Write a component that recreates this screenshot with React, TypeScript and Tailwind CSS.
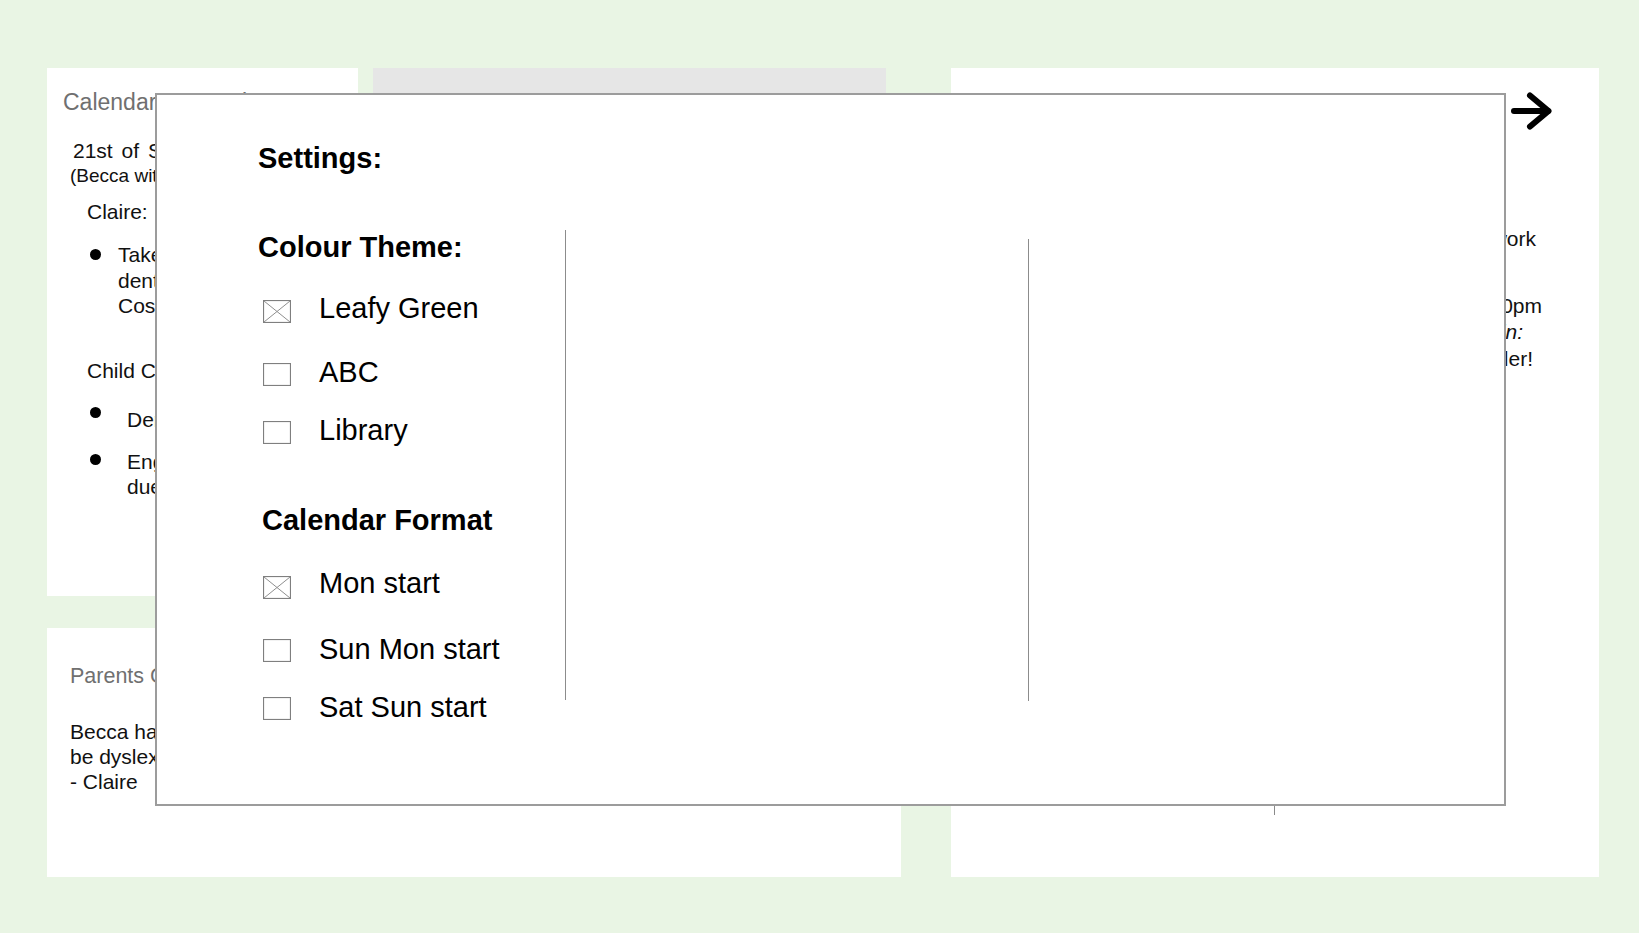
import React from 'react';

function Checkbox({ checked, offset = 8 }: { checked?: boolean; offset?: number }) {
  return (
    <svg
      width="28"
      height="23"
      viewBox="0 0 28 23"
      className="ml-[5px] shrink-0"
      style={{ marginTop: offset }}
    >
      <rect x="0.5" y="0.5" width="27" height="22" fill="white" stroke="#7f7f7f" strokeWidth="1.2" />
      {checked && (
        <>
          <line x1="1" y1="1" x2="27" y2="22" stroke="#8f8f8f" strokeWidth="1" />
          <line x1="27" y1="1" x2="1" y2="22" stroke="#8f8f8f" strokeWidth="1" />
        </>
      )}
    </svg>
  );
}

function Option({ label, checked, className = '', offset }: { label: string; checked?: boolean; className?: string; offset?: number }) {
  return (
    <div className={`flex items-start ${className}`}>
      <Checkbox checked={checked} offset={offset} />
      <span className="ml-[28px] text-[29px] leading-[34px] text-black">{label}</span>
    </div>
  );
}

function Bullet({ top }: { top: number }) {
  return <span className="block h-[11px] w-[11px] shrink-0 rounded-full bg-black" style={{ marginTop: top }} />;
}

export default function App() {
  return (
    <div className="relative min-h-screen overflow-hidden bg-[#e9f5e4] font-['Liberation_Sans',Arial,sans-serif]">
      {/* cards behind the dialog */}
      <div className="flex gap-[50px] pl-[47px] pt-[68px]">
        <div className="flex w-[854px] flex-col gap-[32px]">
          <div className="flex h-[528px] gap-[15px]">
            {/* calendar card */}
            <div className="w-[311px] bg-white pl-[16px] pt-[20px] text-[#111]">
              <div className="whitespace-nowrap text-[23px] leading-[28px] text-[#707070]">Calendar September 2022</div>
              <div className="ml-[10px] mt-[22px] whitespace-nowrap text-[21px] leading-[25px] [word-spacing:3px]">21st of September</div>
              <div className="ml-[7px] mt-[2px] whitespace-nowrap text-[19px] leading-[22px]">(Becca with Claire)</div>
              <div className="ml-[24px] mt-[12px] text-[21px] leading-[25px]">Claire:</div>
              <div className="ml-[27px] mt-[18px] flex whitespace-nowrap text-[21px] leading-[25.5px]">
                <Bullet top={7} />
                <div className="ml-[17px]">
                  <div>Take Becca</div>
                  <div>dentist at 3pm</div>
                  <div>Costa after</div>
                </div>
              </div>
              <div className="ml-[24px] mt-[39px] text-[21px] leading-[25px]">Child Care:</div>
              <div className="ml-[27px] mt-[24px] flex whitespace-nowrap text-[21px] leading-[25px]">
                <Bullet top={0} />
                <div className="ml-[26px]">Dentist note</div>
              </div>
              <div className="ml-[27px] mt-[17px] flex whitespace-nowrap text-[21px] leading-[25px]">
                <Bullet top={5} />
                <div className="ml-[26px]">
                  <div>English test</div>
                  <div>due Friday</div>
                </div>
              </div>
            </div>

            {/* week card */}
            <div className="w-[513px] bg-[#e6e6e6] px-[30px] pt-[20px]">
              <div className="flex justify-between whitespace-nowrap text-[24px] leading-[28px] text-[#333]">
                <span>‹</span>
                <span>Week of September 2022</span>
                <span>›</span>
              </div>
            </div>
          </div>

          {/* parents comments */}
          <div className="h-[249px] bg-white pl-[23px] pt-[35px] text-[#111]">
            <div className="whitespace-nowrap text-[21.5px] leading-[26px] text-[#707070]">Parents Comments</div>
            <div className="mt-[30px] whitespace-nowrap text-[21px] leading-[25px]">
              <div>Becca has been found to</div>
              <div>be dyslexic, let's talk soon</div>
              <div>- Claire</div>
            </div>
          </div>
        </div>

        {/* homework card */}
        <div className="flex h-[809px] w-[648px] flex-col bg-white text-[#111]">
          <div className="flex items-start justify-between pl-[16px] pr-[47px] pt-[24px]">
            <div className="mt-[6px] text-[22px] leading-[26px] text-[#707070]">Homework</div>
            <svg width="42" height="40" viewBox="0 0 42 40" fill="none" stroke="black" strokeWidth="6" strokeLinecap="round" strokeLinejoin="round">
              <path d="M4 19 H38" />
              <path d="M20 3.5 L38.5 19 L20 34.5" />
            </svg>
          </div>
          <div className="flex">
            <div className="h-[683px] w-[324px] border-r border-[#8a8a8a]" />
            <div className="flex-1 whitespace-nowrap pr-[57px] text-right text-[21px] leading-[26.5px]">
              <div className="mt-[94px] pr-[6px]">Spelling homework</div>
              <div className="mt-[40px]">Swimming 3:30pm</div>
              <div className="pr-[19px] italic">Remember to bring in:</div>
              <div className="pr-[9px]">Don't forget a ruler!</div>
            </div>
          </div>
        </div>
      </div>

      {/* settings dialog */}
      <div className="absolute left-[155px] top-[93px] h-[713px] w-[1351px] border-2 border-[#9c9c9c] bg-white pl-[101px] pt-[46px] text-black">
        <div className="text-[29px] font-bold leading-[34px]">Settings:</div>
        <div className="mt-[55px] flex items-start">
          <div className="w-[307px]">
            <div className="text-[29px] font-bold leading-[34px]">Colour Theme:</div>
            <Option className="mt-[27px]" label="Leafy Green" checked offset={9} />
            <Option className="mt-[30px]" label="ABC" />
            <Option className="mt-[24px]" label="Library" />
            <div className="ml-[4px] mt-[56px] text-[29px] font-bold leading-[34px]">Calendar Format</div>
            <Option className="mt-[29px]" label="Mon start" checked offset={10} />
            <Option className="mt-[32px]" label="Sun Mon start" offset={7} />
            <Option className="mt-[24px]" label="Sat Sun start" offset={7} />
          </div>
          <div className="h-[470px] w-px bg-[#8c8c8c]" />
          <div className="w-[462px]" />
          <div className="mt-[9px] h-[462px] w-px bg-[#8c8c8c]" />
        </div>
      </div>
    </div>
  );
}
